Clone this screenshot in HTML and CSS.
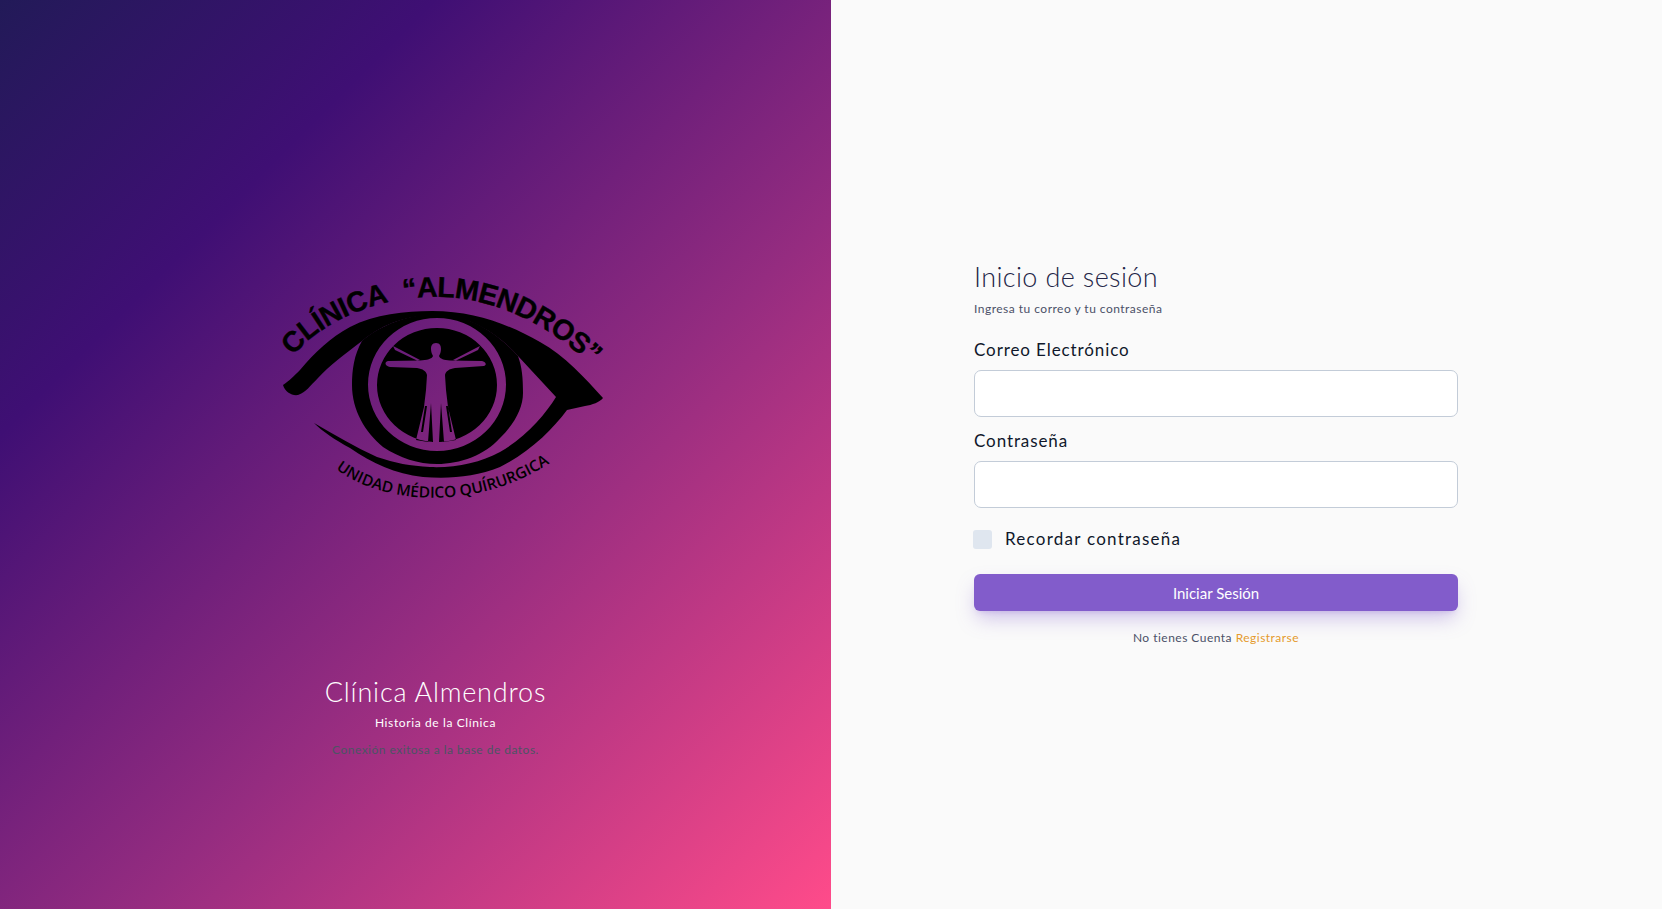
FILE: index.html
```html
<!DOCTYPE html>
<html lang="es">
<head>
<meta charset="utf-8">
<title>Clínica Almendros</title>
<link rel="stylesheet" href="styles.css">
</head>
<body>
<main class="page">
  <section class="brand">
    <div class="logo-wrap">
      <svg class="logo" viewBox="0 0 360 250" width="360" height="250" aria-label="Clínica Almendros">
        <defs>
          <path id="arc-top" d="M33 96 C66 57 125 36 180 37 C240 38 306 70 362 138"/>
          <path id="arc-bot" d="M76 209 C120 243 215 255 296 199"/>
        </defs>
        <text class="logo-top"><textPath href="#arc-top">CLÍNICA “ALMENDROS”</textPath></text>
        <text class="logo-bot"><textPath href="#arc-bot">UNIDAD MÉDICO QUÍRURGICA</textPath></text>
        <path d="M23 125 C30 120 33 117 40 110 C55 92 70 78 90 67 C115 54 145 51 172 51 C215 51 250 65 280 82 C305 96 325 118 343 138 C340 142 332 145 325 146 L307 150 C292 170 270 192 240 207 C215 217 190 219 163 217 C135 214 112 203 90 188 C75 180 62 171 54 163 C75 175 95 187 117 197 C135 203 150 206 170 207 C195 208 220 203 240 192 C265 178 285 155 296 137 L258 96 C235 70 205 55 177 55 C150 55 125 62 102 81 C85 94 70 105 58 118 C50 126 46 132 38 135 C32 136 25 132 23 125 Z"/>
        <path class="cut" d="M177 54 C150 54 120 65 102 81 C94 95 92 110 92 125 C92 150 105 172 123 187 C140 198 158 204 177 204 C200 204 225 195 240 178 C255 163 263 148 263 133 C263 118 262 107 258 96 C235 70 205 54 177 54 Z M108 124.5 A69 66.5 0 1 1 246 124.5 A69 66.5 0 1 1 108 124.5 Z"/>
        <path class="cut" d="M117 125 A60 57 0 1 0 237 125 A60 57 0 1 0 117 125 Z
          M176 83 C180 83 181 86 181 89 C181 92 180 94 179 96 C180 99 184 100 190 100.5 L222 101 C226 102 227 105 224 106 L195 108 C189 109 186 111 185 115 L186 130 L188 147 L196 180 L184 182 L181 143 L179 182 L173 182 L171 143 L168 182 L156 180 L164 147 L166 130 L167 115 C166 111 163 109 157 108 L130 107 C125 106 124 102 128 101 L160 100.5 C167 100 172 99 173 96 C172 94 171 92 171 89 C171 86 172 83 176 83 Z
          M133 86 L137 88 L160 100 L157 100.4 L135 90 Z
          M220 86 L216 88 L193 100 L196 100.4 L218 90 Z
          M165 146 L167 146 L163 172 L161 172 Z
          M188 146 L186 146 L190 172 L192 172 Z"/>
      </svg>
    </div>
    <div class="brand-copy">
      <h2 class="brand-title">Clínica Almendros</h2>
      <p class="brand-sub">Historia de la Clínica</p>
      <p class="brand-status">Conexión exitosa a la base de datos.</p>
    </div>
  </section>
  <section class="panel">
    <form class="form">
      <h1 class="title">Inicio de sesión</h1>
      <p class="lead">Ingresa tu correo y tu contraseña</p>
      <label class="label label-first" for="email">Correo Electrónico</label>
      <input class="input" id="email" type="email">
      <label class="label label-next" for="pass">Contraseña</label>
      <input class="input" id="pass" type="password">
      <label class="check">
        <span class="box"></span>
        <span class="check-text">Recordar contraseña</span>
      </label>
      <button class="btn" type="button">Iniciar Sesión</button>
      <p class="foot">No tienes Cuenta <a class="link" href="#">Registrarse</a></p>
    </form>
  </section>
</main>
</body>
</html>
```
FILE: styles.css
```css
* { box-sizing: border-box; }
html, body { margin: 0; height: 100%; }
body { font-family: "Lato", "Noto Sans", sans-serif; background: #fafafa; overflow: hidden; }
.page { display: grid; grid-template-columns: 831px 831px; height: 909px; }
.brand { padding-left: 40px; background: linear-gradient(135deg, #221a58 0%, #3f0f74 25%, #952c80 60%, #ff4b8a 100%); display: flex; flex-direction: column; align-items: center; color: #fff; }
.logo-wrap { margin-top: 260px; margin-left: 9px; height: 250px; width: 360px; }
.logo { display: block; fill: #000; overflow: visible; }
.logo-top { font: 700 28.5px "Liberation Sans", sans-serif; word-spacing: 9px; letter-spacing: -0.6px; stroke: #000; stroke-width: 0.4px; }
.logo-bot { font: 600 15.5px "Open Sans", sans-serif; }
.cut { fill-rule: evenodd; }
.brand-copy { margin-top: 164px; text-align: center; }
.brand-title { margin: 0; font-size: 27px; font-weight: 300; line-height: 36px; letter-spacing: 0.8px; }
.brand-sub { margin: 4px 0 0; font-size: 12px; line-height: 18px; letter-spacing: 0.62px; }
.brand-status { margin: 9px 0 0; font-size: 12px; line-height: 18px; letter-spacing: 0.48px; color: #4b5563; }
.panel { display: flex; justify-content: center; padding-top: 259px; padding-right: 61px; }
.form { width: 484px; display: flex; flex-direction: column; }
.title { margin: 0; font-size: 27px; font-weight: 300; line-height: 36px; color: #232547; letter-spacing: 0.37px; }
.lead { margin: 5px 0 0; font-size: 12px; line-height: 18px; letter-spacing: 0.48px; color: #4b5068; }
.label { display: block; font-size: 17px; line-height: 24px; color: #0f172a; letter-spacing: 0.9px; }
.label-first { margin-top: 20px; }
.label-next { margin-top: 12px; }
.input { display: block; margin-top: 8px; width: 484px; height: 47px; border: 1px solid #c3ccd8; border-radius: 7px; background: #fff; outline: none; }
.check { display: flex; align-items: center; gap: 13px; margin: 22px 0 0 -1px; height: 19px; font-size: 17px; letter-spacing: 1.25px; color: #0f172a; }
.check-text { padding-bottom: 2px; }
.box { width: 19px; height: 19px; border-radius: 3px; background: #dfe6ef; }
.btn { margin-top: 25px; height: 37px; width: 484px; border: 0; border-radius: 6px; background: #825ccb; color: #fff; font: 400 15px "Lato", sans-serif; box-shadow: 0 10px 20px -3px rgba(130, 92, 203, 0.35), 0 4px 6px -4px rgba(130, 92, 203, 0.3); }
.foot { margin: 18px 0 0; text-align: center; font-size: 12px; line-height: 18px; letter-spacing: 0.48px; color: #4b5068; }
.link { color: #e59a2c; text-decoration: none; }
```
